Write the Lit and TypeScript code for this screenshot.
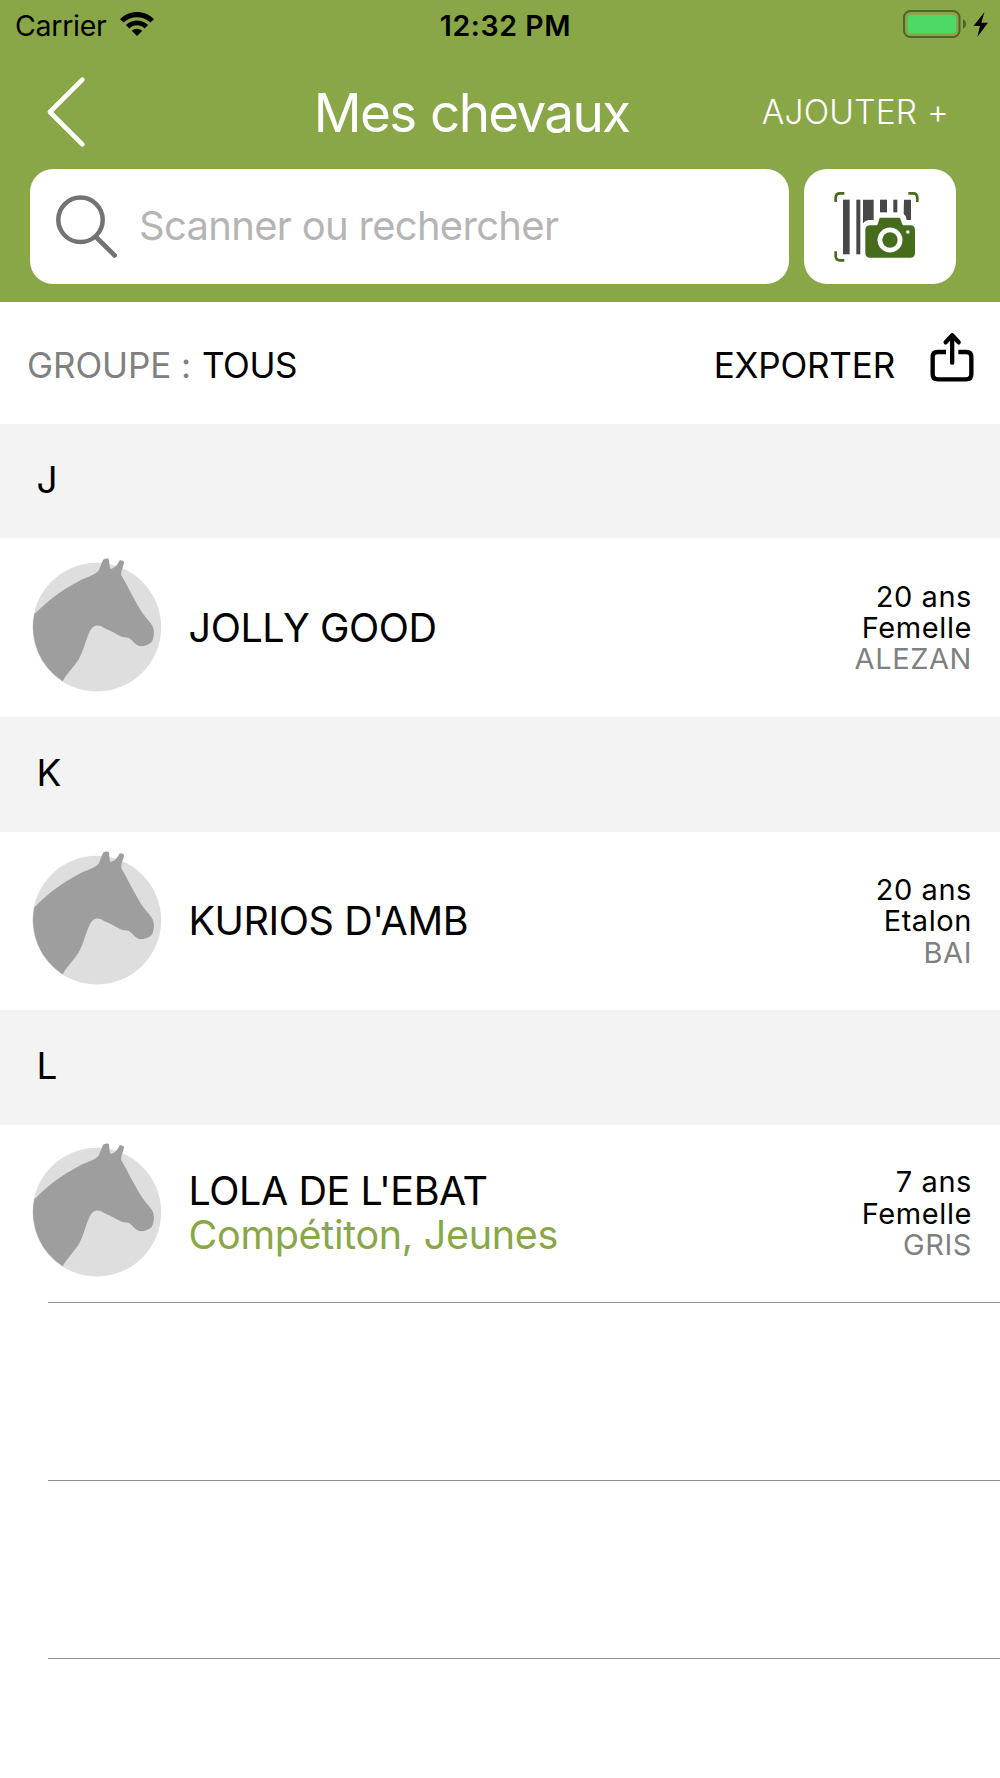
import { LitElement, html, css, svg, nothing } from "lit";
import { customElement, property } from "lit/decorators.js";

interface Horse {
  name: string;
  groups?: string;
  age: string;
  sex: string;
  coat: string;
}

interface Section {
  letter: string;
  horses: Horse[];
}

const SECTIONS: Section[] = [
  { letter: "J", horses: [{ name: "JOLLY GOOD", age: "20 ans", sex: "Femelle", coat: "ALEZAN" }] },
  { letter: "K", horses: [{ name: "KURIOS D'AMB", age: "20 ans", sex: "Etalon", coat: "BAI" }] },
  {
    letter: "L",
    horses: [
      { name: "LOLA DE L'EBAT", groups: "Compétiton, Jeunes", age: "7 ans", sex: "Femelle", coat: "GRIS" },
    ],
  },
];

const wifiIcon = svg`<svg class="wifi" width="34" height="24" viewBox="0 0 34 24">
  <path d="M0 7.200C9.500 -2.400 24.500 -2.400 34 7.200L30.400 10.600C23 3.300 11 3.300 3.600 10.600Z"/>
  <path d="M5.900 12.900C12 6.900 22 6.900 28.100 12.900L24.600 16.400C20.400 12.300 13.600 12.300 9.400 16.400Z"/>
  <path d="M11.700 18.700C14.800 16 19.200 16 22.300 18.700L17 24Z"/>
</svg>`;

const batteryIcon = svg`<svg class="battery" width="86" height="28" viewBox="0 0 86 28">
  <rect x="1" y="1" width="55.500" height="26" rx="6.500" fill="none" stroke="#4f632a" stroke-width="2"/>
  <rect x="5" y="5" width="48" height="18.300" rx="3" fill="#4cd964"/>
  <path d="M60 9.300C63.900 10.500 63.900 17.500 60 18.700Z" fill="#4f632a"/>
  <path d="M81.500 2L70.500 16H77L74.300 27L85 12.800H78.400Z" fill="#000"/>
</svg>`;

const chevronIcon = svg`<svg class="chevron" width="40" height="72" viewBox="0 0 40 72">
  <path d="M36.400 3.600L3.900 36L36.400 68.400" fill="none" stroke="#fff" stroke-width="4.600" stroke-linecap="round" stroke-linejoin="round"/>
</svg>`;

const searchIcon = svg`<svg class="magnifier" width="62" height="64" viewBox="0 0 62 64">
  <circle cx="24.500" cy="24.800" r="22.200" fill="none" stroke="#737371" stroke-width="4.500"/>
  <path d="M39.500 41.500L58.700 60.500" fill="none" stroke="#737371" stroke-width="4.600" stroke-linecap="round"/>
</svg>`;

const scanIcon = svg`<svg class="scan" width="90.667" height="71.333" viewBox="164 108 272 214">
  <g fill="none" stroke="#456b1d" stroke-width="8">
    <path d="M169 141V128Q169 115 182 115H195"/>
    <path d="M387 115H401Q414 115 414 128V141"/>
    <path d="M169 289V303Q169 316 182 316H195"/>
  </g>
  <g fill="#484848">
    <path d="M191 134H211V298H191Z"/>
    <path d="M231 134H243V298H231Z"/>
    <path d="M251 134H283V195H268Q257 196 251 205Z"/>
    <path d="M302 134H323V172H302Z"/>
    <path d="M342 134H354V172H342Z"/>
    <path d="M374 134H395V195H382L379 183L373 177Z"/>
  </g>
  <path fill="#456b1d" fill-rule="evenodd" d="M272 211H292Q294 211 295 208L300 191Q301 188 304 188H359Q362 188 363 191L369 208Q370 211 373 211H393Q407 211 407 225V294Q407 308 393 308H272Q258 308 258 294V225Q258 211 272 211ZM332 217.500A37.500 37.500 0 1 0 332 292.500A37.500 37.500 0 1 0 332 217.500ZM385.500 225.500A5.500 5.500 0 1 0 385.500 236.500A5.500 5.500 0 1 0 385.500 225.500Z"/>
  <circle cx="332" cy="255" r="23" fill="#456b1d"/>
</svg>`;

const shareIcon = svg`<svg class="share" width="44" height="50" viewBox="750 66 132 150">
  <g fill="none" stroke="#000" stroke-width="13" stroke-linejoin="round">
    <path d="M798 126H773Q758 126 758 141V193Q758 208 773 208H859Q874 208 874 193V141Q874 126 859 126H835"/>
    <path d="M816.500 158V77" stroke-linecap="round"/>
    <path d="M797 97L816.500 76L836 97" stroke-linecap="round"/>
  </g>
</svg>`;

const horseIcon = svg`<svg class="avatar" width="132" height="142" viewBox="96 80 396 426">
  <circle cx="293.500" cy="290.500" r="193" fill="#dedede"/>
  <path fill="#9e9e9e" d="M106 252C150 211 175 186 250 147C270 138 295 132 301 117L309 96C312 86 318 84 328 85C333 91 329 105 335 116C346 113 354 107 360 93C362 88 368 90 375 94C376 106 364 118 367 135C390 175 410 218 432 250C444 267 463 283 464 298C466 315 463 330 456 337C440 348 422 352 411 342C401 335 397 325 388 322C370 322 362 316 352 311C338 303 320 296 305 287C288 281 279 291 273 302C259 330 255 360 238 389C222 412 205 428 191 453A193.500 193.500 0 0 1 106 252Z"/>
</svg>`;

@customElement("status-bar")
export class StatusBar extends LitElement {
  static styles = css`
    :host {
      display: grid;
      grid-template-columns: 1fr auto 1fr;
      height: 51px;
      padding: 0 11px 0 15px;
      font-size: 28.5px;
      line-height: 51px;
      color: #000;
    }
    .carrier {
      display: flex;
      letter-spacing: -0.28px;
    }
    .wifi {
      margin: 12px 0 0 14px;
    }
    .time {
      font-weight: 600;
      letter-spacing: 0.59px;
      padding-left: 7px;
    }
    .power {
      display: flex;
      justify-content: flex-end;
    }
    .battery {
      margin-top: 10px;
    }
  `;
  render() {
    return html`
      <div class="carrier"><span>Carrier</span>${wifiIcon}</div>
      <div class="time">12:32 PM</div>
      <div class="power">${batteryIcon}</div>
    `;
  }
}

@customElement("nav-header")
export class NavHeader extends LitElement {
  static styles = css`
    :host {
      display: block;
      color: #fff;
    }
    .nav {
      display: grid;
      grid-template-columns: 1fr auto 1fr;
      align-items: center;
      height: 118px;
      box-sizing: border-box;
      padding: 3px 51px 0 46px;
    }
    .chevron {
      display: block;
    }
    .title {
      margin: 0 52px 0 0;
      padding-top: 2px;
      font-weight: 400;
      font-size: 53px;
      letter-spacing: -1.7px;
      word-spacing: 1.5px;
    }
    .add {
      justify-self: end;
      font-size: 33.5px;
      font-weight: 350;
      letter-spacing: 0.2px;
      white-space: nowrap;
    }
    .tools {
      display: flex;
      gap: 15px;
      padding: 0 44.5px 18px 30px;
    }
    .field,
    .scan-button {
      display: flex;
      align-items: center;
      box-sizing: border-box;
      height: 115px;
      border-radius: 23px;
      background: #fff;
    }
    .field {
      flex: 1;
      padding-left: 26px;
      gap: 16px;
      color: #b5b5b5;
      font-size: 40px;
      letter-spacing: -0.7px;
    }
    .placeholder {
      padding: 0 0 2px 5px;
    }
    .scan-button {
      width: 151.500px;
      justify-content: center;
    }
  `;
  render() {
    return html`
      <div class="nav">
        ${chevronIcon}
        <h1 class="title">Mes chevaux</h1>
        <span class="add">AJOUTER +</span>
      </div>
      <div class="tools">
        <div class="field">${searchIcon}<span class="placeholder">Scanner ou rechercher</span></div>
        <div class="scan-button">${scanIcon}</div>
      </div>
    `;
  }
}

@customElement("filter-bar")
export class FilterBar extends LitElement {
  static styles = css`
    :host {
      display: flex;
      align-items: center;
      justify-content: space-between;
      box-sizing: border-box;
      height: 122px;
      padding: 0 26px 0 27px;
      font-size: 35px;
    }
    .group {
      display: flex;
      gap: 11px;
      padding-top: 4px;
      letter-spacing: -0.45px;
    }
    .label {
      color: #808080;
      letter-spacing: -0.1px;
    }
    .export {
      display: flex;
      align-items: center;
      gap: 35px;
      letter-spacing: -0.17px;
    }
    .export-label {
      padding-top: 4px;
    }
    .share {
      margin-top: -12px;
    }
  `;
  render() {
    return html`
      <div class="group"><span class="label">GROUPE :</span><span>TOUS</span></div>
      <div class="export"><span class="export-label">EXPORTER</span>${shareIcon}</div>
    `;
  }
}

@customElement("horse-row")
export class HorseRow extends LitElement {
  @property({ attribute: false }) horse!: Horse;
  static styles = css`
    :host {
      display: flex;
      align-items: center;
      height: 100%;
      padding: 0 28px 0 31px;
    }
    .avatar {
      flex: none;
    }
    .identity {
      flex: 1;
      padding-left: 25.5px;
      font-size: 39.5px;
      line-height: 44px;
      letter-spacing: -0.42px;
    }
    .groups {
      color: #89a746;
      letter-spacing: -0.31px;
    }
    .details {
      text-align: right;
      font-size: 29px;
      line-height: 31.4px;
      letter-spacing: 0.58px;
    }
    .coat {
      color: #808080;
    }
  `;
  render() {
    const h = this.horse;
    return html`
      ${horseIcon}
      <div class="identity">
        <div>${h.name}</div>
        ${h.groups ? html`<div class="groups">${h.groups}</div>` : nothing}
      </div>
      <div class="details">
        <div>${h.age}</div>
        <div>${h.sex}</div>
        <div class="coat">${h.coat}</div>
      </div>
    `;
  }
}

@customElement("app-root")
export class AppRoot extends LitElement {
  static styles = css`
    :host {
      display: block;
      min-height: 1778px;
      background: #fff;
      color: #000;
      font-family: Inter, "Liberation Sans", sans-serif;
    }
    .top {
      height: 302px;
      background: #89a746;
    }
    .letter {
      box-sizing: border-box;
      height: 114.400px;
      padding: 0 36.500px;
      font-size: 37px;
      line-height: 112px;
      background: #f3f3f3;
    }
    .row {
      height: 178.800px;
    }
    section:last-of-type .row {
      height: 177.200px;
    }
    .empty {
      box-sizing: border-box;
      height: 178px;
      margin-left: 48px;
      border-top: 1px solid #8e8e8e;
    }
  `;
  render() {
    return html`
      <div class="top">
        <status-bar></status-bar>
        <nav-header></nav-header>
      </div>
      <filter-bar></filter-bar>
      ${SECTIONS.map(
        (s) => html`<section>
          <div class="letter">${s.letter}</div>
          ${s.horses.map((h) => html`<div class="row"><horse-row .horse=${h}></horse-row></div>`)}
        </section>`
      )}
      <div class="empty"></div>
      <div class="empty"></div>
      <div class="empty"></div>
    `;
  }
}
